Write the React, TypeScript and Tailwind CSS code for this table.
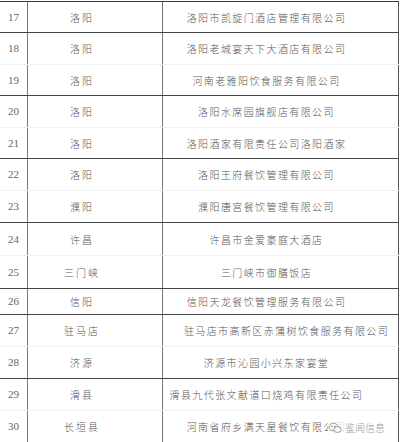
import React from 'react';

type Row = { no: number; city: string; name: string; h: number; end: boolean; wide?: boolean };

const rows: Row[] = [
  { no: 17, city: '洛阳', name: '洛阳市凯旋门酒店管理有限公司', h: 31, end: true },
  { no: 18, city: '洛阳', name: '洛阳老城宴天下大酒店有限公司', h: 32, end: false },
  { no: 19, city: '洛阳', name: '河南老雅阳饮食服务有限公司', h: 31, end: true },
  { no: 20, city: '洛阳', name: '洛阳水席园旗舰店有限公司', h: 32, end: false },
  { no: 21, city: '洛阳', name: '洛阳酒家有限责任公司洛阳酒家', h: 31, end: true },
  { no: 22, city: '洛阳', name: '洛阳王府餐饮管理有限公司', h: 32, end: false },
  { no: 23, city: '濮阳', name: '濮阳唐宫餐饮管理有限公司', h: 32, end: true },
  { no: 24, city: '许昌', name: '许昌市金爱豪庭大酒店', h: 33, end: false },
  { no: 25, city: '三门峡', name: '三门峡市御膳饭店', h: 33, end: true },
  { no: 26, city: '信阳', name: '信阳天龙餐饮管理服务有限公司', h: 26, end: true },
  { no: 27, city: '驻马店', name: '驻马店市高新区赤蒲树饮食服务有限公司', h: 32, end: false, wide: true },
  { no: 28, city: '济源', name: '济源市沁园小兴东家宴堂', h: 32, end: true },
  { no: 29, city: '滑县', name: '滑县九代张文献道口烧鸡有限责任公司', h: 32, end: false },
  { no: 30, city: '长垣县', name: '河南省府乡满天星餐饮有限公司', h: 32, end: false },
];

// scanned look: thin, light grey glyphs
const cjk = "font-['Noto_Sans_CJK_SC',sans-serif] font-extralight";

const App: React.FC = () => {
  return (
    <div className="relative w-[400px] h-[442px] overflow-hidden bg-white">
      <div className="mt-px border-t border-[#3a3a3a] w-[399px]">
        {rows.map(r => (
          <div
            key={r.no}
            className={`flex ${r.end ? 'border-b border-[#444]' : 'border-b border-[#f1f1f1]'}`}
            style={{ height: r.h }}
          >
            <div className="w-[28px] shrink-0 border-r border-[#777] flex items-center justify-center font-['Liberation_Serif',serif] text-[11px] text-[#666]">
              {r.no}
            </div>
            <div className={`w-[135px] shrink-0 border-r border-[#777] flex items-center justify-center pr-[26px] text-[10px] tracking-[2px] text-[#555] ${cjk}`}>
              {r.city}
            </div>
            <div
              className={`flex-1 border-r border-[#555] flex items-center justify-center whitespace-nowrap text-[10px] tracking-[1.4px] text-[#555] ${cjk} ${r.wide ? 'pl-[12px]' : 'pr-[28px]'}`}
            >
              {r.name}
            </div>
          </div>
        ))}
      </div>

      <div className="absolute left-[328px] top-[420px] flex items-center gap-[3px] bg-white/80 pr-[2px]">
        <svg width="14" height="12" viewBox="0 0 14 12" fill="none" stroke="#9a9a9a" strokeWidth="1">
          <ellipse cx="5.5" cy="5" rx="4.5" ry="3.8" />
          <ellipse cx="9.5" cy="7.5" rx="3.6" ry="3" fill="white" />
          <circle cx="4" cy="4.5" r="0.5" fill="#9a9a9a" />
          <circle cx="7" cy="4.5" r="0.5" fill="#9a9a9a" />
        </svg>
        <span className={`text-[10px] text-[#9a9a9a] ${cjk}`}>鉴闻信息</span>
      </div>
    </div>
  );
};

export default App;
